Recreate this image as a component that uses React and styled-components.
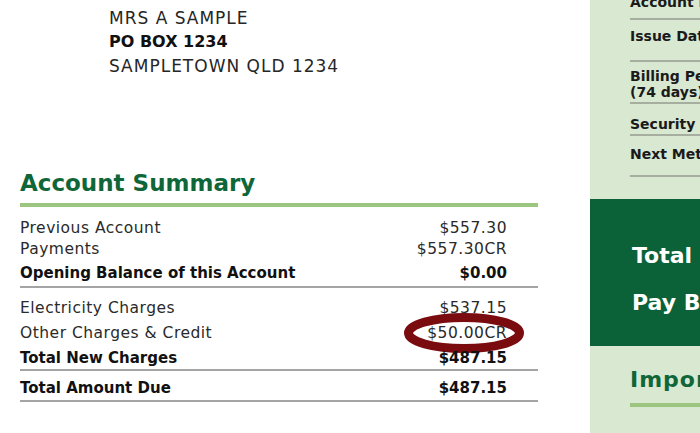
import React from "react";
import styled, { createGlobalStyle } from "styled-components";

const summary = [
  {
    pt: 10,
    rows: [
      { label: "Previous Account", amount: "$557.30", h: 22 },
      { label: "Payments", amount: "$557.30CR", h: 20 },
      { label: "Opening Balance of this Account", amount: "$0.00", h: 27, bold: true },
    ],
  },
  {
    pt: 8,
    rows: [
      { label: "Electricity Charges", amount: "$537.15", h: 24 },
      { label: "Other Charges & Credit", amount: "$50.00CR", h: 26, circled: true },
      { label: "Total New Charges", amount: "$487.15", h: 23, bold: true },
    ],
  },
  {
    pt: 4,
    rows: [{ label: "Total Amount Due", amount: "$487.15", h: 25, bold: true }],
  },
];

const details = [
  { lines: ["Account Number"], h: 40, pt: 14 },
  { lines: ["Issue Date"], h: 42, pt: 8 },
  { lines: ["Billing Period", "(74 days)"], h: 42, pt: 6 },
  { lines: ["Security Deposit"], h: 32, pt: 12 },
  { lines: ["Next Meter Read"], h: 41, pt: 10 },
];

export default function App() {
  return (
    <>
      <GlobalStyle />
      <Page>
        <Main>
          <Address>
            <div>MRS A SAMPLE</div>
            <AddressStrong>PO BOX 1234</AddressStrong>
            <div>SAMPLETOWN QLD 1234</div>
          </Address>

          <Heading>Account Summary</Heading>
          <GreenBar />

          {summary.map((group, gi) => (
            <Group key={gi} $pt={group.pt}>
              {group.rows.map((r) => (
                <Row key={r.label} $h={r.h} $bold={r.bold}>
                  <span>{r.label}</span>
                  <span>{r.amount}</span>
                  {r.circled && (
                    <Circle width="120" height="40" viewBox="0 0 120 40">
                      <ellipse cx="60" cy="20" rx="55.5" ry="15.5" fill="none" stroke="#7a0c10" strokeWidth="9" />
                    </Circle>
                  )}
                </Row>
              ))}
            </Group>
          ))}
        </Main>

        <Sidebar>
          <DetailList>
            {details.map((d) => (
              <DetailRow key={d.lines[0]} $h={d.h} $pt={d.pt}>
                {d.lines.map((l) => (
                  <div key={l}>{l}</div>
                ))}
              </DetailRow>
            ))}
          </DetailList>

          <DuePanel>
            <DueLine>
              <span>Total</span>
              <span>$487.15</span>
            </DueLine>
            <DueLine>
              <span>Pay By 21 March</span>
            </DueLine>
          </DuePanel>

          <SideHeading>Important Information</SideHeading>
          <SideBar />
        </Sidebar>
      </Page>
    </>
  );
}

/* ----------------------------- STYLED COMPONENTS ----------------------------- */

const GlobalStyle = createGlobalStyle`
  html, body {
    margin: 0;
    padding: 0;
    background: #fff;
    overflow: hidden;
  }
  body {
    font-family: "DejaVu Sans", "Liberation Sans", sans-serif;
    color: #222;
  }
`;

const Page = styled.div`
  display: flex;
  width: 700px;
  height: 433px;
  overflow: hidden;
`;

const Main = styled.div`
  flex: none;
  width: 590px;
  box-sizing: border-box;
  padding: 6px 52px 0 20px;
`;

const Address = styled.div`
  margin-left: 89px;
  font-size: 17px;
  letter-spacing: 1px;
  line-height: 24px;
  color: #262626;
`;

const AddressStrong = styled.div`
  font-size: 16px;
  font-weight: 700;
  letter-spacing: 0;
  color: #111;
`;

const Heading = styled.h2`
  margin: 90px 0 0 0;
  font-size: 23px;
  line-height: 30px;
  font-weight: 700;
  color: #0f6638;
`;

const GreenBar = styled.div`
  height: 4px;
  margin-top: 5px;
  background: #9cc67f;
`;

const Group = styled.div`
  padding-top: ${({ $pt }) => $pt}px;
  border-bottom: 2px solid #a4a4a4;
`;

const Row = styled.div`
  position: relative;
  display: flex;
  justify-content: space-between;
  align-items: center;
  height: ${({ $h }) => $h}px;
  padding-right: 31px;
  white-space: nowrap;
  font-size: ${({ $bold }) => ($bold ? "15px" : "15.5px")};
  font-weight: ${({ $bold }) => ($bold ? 700 : 400)};
  letter-spacing: ${({ $bold }) => ($bold ? "0" : "0.5px")};
  color: ${({ $bold }) => ($bold ? "#111" : "#2a2a2a")};
`;

const Circle = styled.svg`
  position: absolute;
  left: 384px;
  top: -7px;
`;

const Sidebar = styled.div`
  flex: 1;
  background: #d9e8d0;
  overflow: hidden;
  white-space: nowrap;
`;

const DetailList = styled.div`
  margin-top: -20px;
`;

const DetailRow = styled.div`
  box-sizing: border-box;
  height: ${({ $h }) => $h}px;
  padding-top: ${({ $pt }) => $pt}px;
  margin-left: 40px;
  border-bottom: 2px solid #a6af9f;
  font-size: 14px;
  font-weight: 700;
  line-height: 16px;
  color: #1a1a1a;
`;

const DuePanel = styled.div`
  box-sizing: border-box;
  height: 147px;
  margin-top: 22px;
  padding: 32.5px 0 0 42px;
  background: #0b6239;
`;

const DueLine = styled.div`
  display: flex;
  gap: 40px;
  font-size: 22px;
  font-weight: 700;
  line-height: 47px;
  color: #fff;
`;

const SideHeading = styled.div`
  margin: 19px 0 0 40px;
  font-size: 22px;
  font-weight: 700;
  letter-spacing: 1px;
  line-height: 30px;
  color: #0f6638;
`;

const SideBar = styled.div`
  height: 4px;
  margin: 8px 0 0 40px;
  background: #9cc67f;
`;
